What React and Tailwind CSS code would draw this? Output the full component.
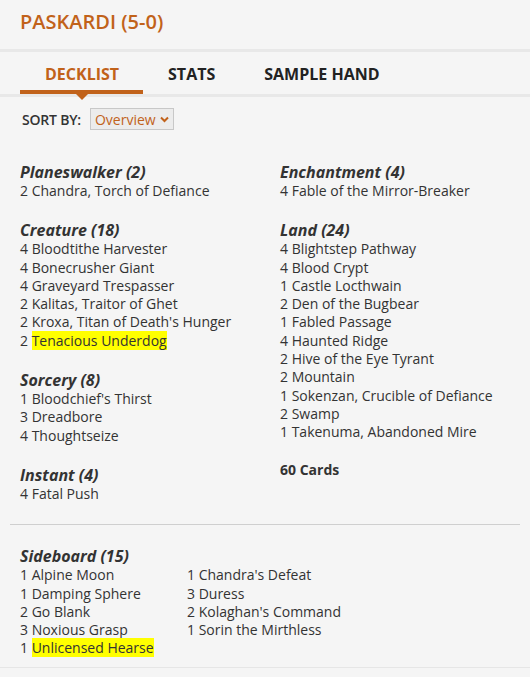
import React from 'react';

const LEFT = [
  { title: 'Planeswalker (2)', cards: [['2', 'Chandra, Torch of Defiance']] },
  {
    title: 'Creature (18)',
    cards: [
      ['4', 'Bloodtithe Harvester'],
      ['4', 'Bonecrusher Giant'],
      ['4', 'Graveyard Trespasser'],
      ['2', 'Kalitas, Traitor of Ghet'],
      ['2', "Kroxa, Titan of Death's Hunger"],
      ['2', 'Tenacious Underdog', true],
    ],
  },
  {
    title: 'Sorcery (8)',
    cards: [
      ['1', "Bloodchief's Thirst"],
      ['3', 'Dreadbore'],
      ['4', 'Thoughtseize'],
    ],
  },
  { title: 'Instant (4)', cards: [['4', 'Fatal Push']] },
];

const RIGHT = [
  { title: 'Enchantment (4)', cards: [['4', 'Fable of the Mirror-Breaker']] },
  {
    title: 'Land (24)',
    cards: [
      ['4', 'Blightstep Pathway'],
      ['4', 'Blood Crypt'],
      ['1', 'Castle Locthwain'],
      ['2', 'Den of the Bugbear'],
      ['1', 'Fabled Passage'],
      ['4', 'Haunted Ridge'],
      ['2', 'Hive of the Eye Tyrant'],
      ['2', 'Mountain'],
      ['1', 'Sokenzan, Crucible of Defiance'],
      ['2', 'Swamp'],
      ['1', 'Takenuma, Abandoned Mire'],
    ],
  },
];

const SIDE_A = [
  ['1', 'Alpine Moon'],
  ['1', 'Damping Sphere'],
  ['2', 'Go Blank'],
  ['3', 'Noxious Grasp'],
  ['1', 'Unlicensed Hearse', true],
];
const SIDE_B = [
  ['1', "Chandra's Defeat"],
  ['3', 'Duress'],
  ['2', "Kolaghan's Command"],
  ['1', 'Sorin the Mirthless'],
];

function Card({ qty, name, hl }) {
  return (
    <div className="text-[14px] leading-[18.3px] text-[#333] whitespace-nowrap">
      {qty}{' '}
      {hl ? <span className="bg-[#ffff00]">{name}</span> : name}
    </div>
  );
}

function Section({ title, cards }) {
  return (
    <div className="mb-[20px]">
      <h3 className="text-[16px] leading-[20px] font-bold italic text-[#333]">{title}</h3>
      {cards.map(([q, n, hl]) => <Card key={n} qty={q} name={n} hl={hl} />)}
    </div>
  );
}

export default function App() {
  return (
    <div className="w-[530px] min-h-[677px] bg-[#f5f5f5] font-['Open_Sans',sans-serif]">
      {/* Title */}
      <div className="px-[20px] pt-[10px] h-[49px]">
        <h1 className="text-[20px] leading-[24px] font-semibold text-[#c1621a]">PASKARDI (5-0)</h1>
      </div>
      <div className="h-[3px] bg-[#e8e8e8]" />

      {/* Tabs */}
      <div className="relative px-[20px] pt-[12px] flex">
        {['DECKLIST', 'STATS', 'SAMPLE HAND'].map((t, i) => (
          <div key={t}
            className={`relative px-[25px] pb-[6px] text-[16px] leading-[20px] font-bold ${i === 0 ? 'text-[#c1621a] border-b-4 border-[#c1621a] pl-[25px] pr-[24px]' : 'text-[#222]'} ${i === 2 ? 'pl-[24px]' : ''}`}>
            {t}
            {i === 0 && (
              <span className="absolute left-1/2 -translate-x-1/2 top-full mt-[4px] w-0 h-0 border-l-[6px] border-r-[6px] border-t-[6px] border-l-transparent border-r-transparent border-t-[#c1621a] z-10" />
            )}
          </div>
        ))}
      </div>
      <div className="h-[3px] bg-[#e8e8e8]" />

      {/* Sort by */}
      <div className="flex items-center gap-[9px] pl-[22px] pt-[11px]">
        <span className="text-[14px] font-semibold text-[#333] tracking-[-0.2px]">SORT BY:</span>
        <div className="flex items-center gap-[4px] h-[22px] px-[4px] bg-[#ececec] border border-[#c8c8c8] text-[14px] text-[#c1621a]">
          Overview
          <svg width="9" height="7" viewBox="0 0 9 7" className="mt-[1px]">
            <path d="M1 1.5 L4.5 5 L8 1.5" fill="none" stroke="#c1621a" strokeWidth="2" />
          </svg>
        </div>
      </div>

      {/* Main deck */}
      <div className="grid grid-cols-[260px_1fr] px-[20px] pt-[32px]">
        <div>
          {LEFT.map(s => <Section key={s.title} {...s} />)}
        </div>
        <div>
          {RIGHT.map(s => <Section key={s.title} {...s} />)}
          <div className="text-[14px] leading-[18px] font-bold text-[#333] -mt-[1px]">60 Cards</div>
        </div>
      </div>

      <div className="mx-[10px] mt-[1px] border-t border-[#cfcfcf]" />

      {/* Sideboard */}
      <div className="px-[20px] pt-[21px] pb-[9px] border-b border-[#e6e6e6]">
        <h3 className="text-[16px] leading-[20px] font-bold italic text-[#333]">Sideboard (15)</h3>
        <div className="grid grid-cols-[167px_1fr]">
          <div>{SIDE_A.map(([q, n, hl]) => <Card key={n} qty={q} name={n} hl={hl} />)}</div>
          <div>{SIDE_B.map(([q, n]) => <Card key={n} qty={q} name={n} />)}</div>
        </div>
      </div>
    </div>
  );
}
